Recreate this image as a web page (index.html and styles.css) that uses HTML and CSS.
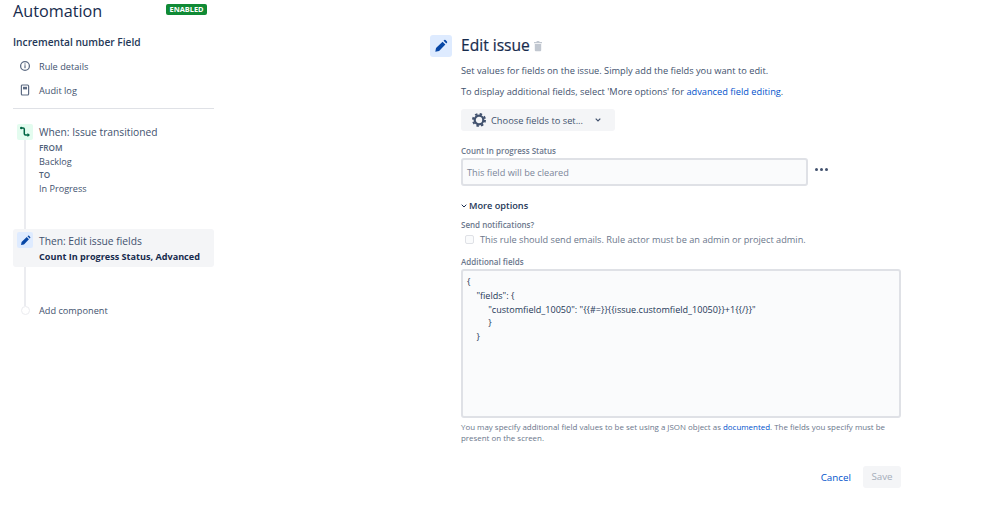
FILE: index.html
```html
<!DOCTYPE html>
<html lang="en">
<head>
<meta charset="utf-8">
<title>Automation</title>
<link rel="stylesheet" href="styles.css">
</head>
<body>
<div class="page">
  <aside class="side">
    <header class="side-head">
      <h1 class="title">Automation</h1>
      <span class="lozenge">ENABLED</span>
    </header>
    <h2 class="rule-name">Incremental number Field</h2>
    <nav class="side-nav">
      <a class="nav-item">
        <svg class="nav-icon" viewBox="0 0 12 12" width="12" height="12"><circle cx="6" cy="6" r="4.4" fill="none" stroke="#5e6c84" stroke-width="1.3"/><rect x="5.4" y="5.2" width="1.2" height="3" fill="#5e6c84"/><rect x="5.4" y="3.4" width="1.2" height="1.2" fill="#5e6c84"/></svg>
        <span>Rule details</span>
      </a>
      <a class="nav-item">
        <svg class="nav-icon" viewBox="0 0 12 12" width="12" height="12"><rect x="2.4" y="1" width="7.2" height="10" rx="1" fill="none" stroke="#5e6c84" stroke-width="1.2"/><rect x="4" y="2.8" width="4" height="2.6" fill="#5e6c84"/></svg>
        <span>Audit log</span>
      </a>
    </nav>
    <div class="flow">
      <div class="flow-line"></div>
      <div class="step step-when">
        <span class="step-icon green">
          <svg viewBox="0 0 12 12" width="12" height="12"><path d="M2.2 2H4.2Q5.3 2 5.3 3.1V7.8Q5.3 9 6.5 9H9" fill="none" stroke="#006644" stroke-width="1.5"/><circle cx="2.2" cy="2" r="1.2" fill="#006644"/><path d="M8.5 6.9 11 9 8.500 11.1Z" fill="#006644"/></svg>
        </span>
        <div class="step-body">
          <div class="step-title">When: Issue transitioned</div>
          <div class="step-key">FROM</div>
          <div class="step-val">Backlog</div>
          <div class="step-key">TO</div>
          <div class="step-val">In Progress</div>
        </div>
      </div>
      <div class="step step-then">
        <span class="step-icon blue">
          <svg viewBox="0 0 16 16" width="11" height="11"><path d="M1.5 14.5 2.3 10.2 9.8 3 13 6.2 5.8 13.7Z M10.9 1.9 11.7 1.2a1.1 1.1 0 0 1 1.5 0l1.6 1.6a1.1 1.1 0 0 1 0 1.5L14.1 5.1Z" fill="#0747a6"/></svg>
        </span>
        <div class="step-body">
          <div class="step-title">Then: Edit issue fields</div>
          <div class="step-strong">Count In progress Status, Advanced</div>
        </div>
      </div>
      <div class="step step-add">
        <span class="add-dot"></span>
        <span class="add-label">Add component</span>
      </div>
    </div>
  </aside>

  <main class="panel">
    <header class="panel-head">
      <span class="panel-icon">
        <svg viewBox="0 0 16 16" width="14" height="14"><path d="M1.5 14.5 2.3 10.2 9.8 3 13 6.2 5.8 13.7Z M10.9 1.9 11.7 1.2a1.1 1.1 0 0 1 1.5 0l1.6 1.6a1.1 1.1 0 0 1 0 1.5L14.1 5.1Z" fill="#0747a6"/></svg>
      </span>
      <h2 class="panel-title">Edit issue</h2>
      <svg class="trash" viewBox="0 0 10 12" width="10" height="12"><path d="M3.6 1h2.8v1H9v1.2H1V2h2.6Z M1.8 4h6.4v6.2a1 1 0 0 1-1 1H2.8a1 1 0 0 1-1-1Z" fill="#c1c7d0"/></svg>
    </header>
    <div class="panel-body">
      <p class="text">Set values for fields on the issue. Simply add the fields you want to edit.</p>
      <p class="text">To display additional fields, select 'More options' for <a class="link">advanced field editing</a>.</p>
      <button class="choose" type="button">
        <svg viewBox="0 0 16 16" width="16" height="16"><circle cx="8" cy="8" r="4.3" fill="none" stroke="#42526e" stroke-width="2.2"/><circle cx="8" cy="8" r="6" fill="none" stroke="#42526e" stroke-width="2" stroke-dasharray="2.4 2.312"/></svg>
        <span>Choose fields to set...</span>
        <svg class="chev" viewBox="0 0 6 4" width="6" height="4"><path d="M.7.6 3 2.9 5.3.6" fill="none" stroke="#42526e" stroke-width="1.2"/></svg>
      </button>
      <label class="label label-count">Count In progress Status</label>
      <div class="field-row">
        <div class="input">This field will be cleared</div>
        <span class="dots"><i></i><i></i><i></i></span>
      </div>
      <div class="more">
        <svg viewBox="0 0 6 4" width="6" height="4"><path d="M.7.7 3 3 5.3.7" fill="none" stroke="#172b4d" stroke-width="1"/></svg>
        <span>More options</span>
      </div>
      <label class="label label-send">Send notifications?</label>
      <div class="check-row">
        <span class="check"></span>
        <span>This rule should send emails. Rule actor must be an admin or project admin.</span>
      </div>
      <label class="label label-add">Additional fields</label>
      <pre class="json">{
    "fields": {
         "customfield_10050": "{{#=}}{{issue.customfield_10050}}+1{{/}}"
         }
    }</pre>
      <p class="help">You may specify additional field values to be set using a JSON object as <a class="link">documented</a>. The fields you specify must be present on the screen.</p>
      <div class="actions">
        <a class="cancel">Cancel</a>
        <span class="save">Save</span>
      </div>
    </div>
  </main>
</div>
</body>
</html>
```
FILE: styles.css
```css
* { box-sizing: border-box; }
html, body { margin: 0; padding: 0; background: #fff; }
body {
  width: 999px;
  height: 505px;
  overflow: hidden;
  font-family: "Open Sans", "Noto Sans", sans-serif;
  font-size: 10px;
  color: #172b4d;
}
.page { display: flex; align-items: flex-start; }
.side { width: 201px; margin-left: 13px; flex: none; }
.side-head { display: flex; align-items: flex-start; justify-content: space-between; height: 33px; padding-right: 7px; }
.title { margin: 0; font-size: 16.2px; font-weight: 400; line-height: 22px; color: #172b4d; }
.lozenge {
  margin-top: 4px;
  background: #108a35;
  color: #fff;
  font-size: 7.4px;
  font-weight: 700;
  line-height: 11px;
  padding: 0 3.5px;
  border-radius: 2px;
}
.rule-name { margin: 0; font-size: 10.2px; font-weight: 600; line-height: 18px; color: #253858; }
.side-nav { margin-top: 3px; border-bottom: 1px solid #dfe1e6; padding-bottom: 6px; }
.nav-item { display: flex; align-items: center; height: 24px; padding-left: 6px; color: #42526e; font-size: 9.2px; }
.nav-icon { margin-right: 8px; flex: none; }
.flow { position: relative; padding-top: 15px; }
.flow-line { position: absolute; left: 11px; top: 25px; width: 2px; height: 172px; background: #ebecf0; }
.step { position: relative; display: flex; }
.step-when { padding-left: 4px; height: 105px; }
.step-icon { width: 16px; height: 16px; border-radius: 2px; flex: none; display: flex; align-items: center; justify-content: center; }
.step-icon.green { background: #e3fcef; }
.step-icon.blue { background: #deebff; }
.step-body { margin-left: 6px; }
.step-title { font-size: 10.25px; line-height: 16px; margin-bottom: 1px; color: #42526e; }
.step-key { font-size: 8.2px; font-weight: 600; line-height: 13.5px; color: #505f79; }
.step-val { font-size: 9.1px; line-height: 13.5px; color: #42526e; }
.step-then { background: #f4f5f7; border-radius: 3px; padding: 3px 4px; height: 38px; }
.step-then .step-body { padding-top: 1px; }
.step-then .step-title { margin-bottom: 0; }
.step-strong { font-size: 9.1px; font-weight: 700; line-height: 16px; color: #172b4d; white-space: nowrap; }
.step-add { margin-top: 35px; padding-left: 8px; align-items: center; height: 16px; }
.add-dot { width: 9px; height: 9px; border-radius: 50%; background: #fff; border: 1px solid #ebecf0; flex: none; margin-right: 9px; }
.add-label { font-size: 9.2px; color: #42526e; }
.panel { margin-left: 216px; width: 472px; padding-top: 35px; flex: none; }
.panel-head { display: flex; align-items: center; height: 22px; }
.panel-icon { width: 22px; height: 22px; background: #deebff; border-radius: 3px; display: flex; align-items: center; justify-content: center; flex: none; }
.panel-title { margin: 0 0 2px 9px; font-size: 15.6px; font-weight: 400; color: #172b4d; -webkit-text-stroke: 0.2px #172b4d; }
.trash { margin-left: 3px; }
.panel-body { padding-left: 31px; width: 471px; }
.text { margin: 0; font-size: 9.25px; line-height: 21px; color: #42526e; }
.panel-body > .text:first-child { margin-top: 3px; }
.link { color: #0052cc; }
.choose {
  display: flex;
  align-items: center;
  width: 154px;
  height: 22px;
  margin-top: 7px;
  padding: 0 10px;
  background: #f4f5f7;
  border: 0;
  border-radius: 3px;
  font: inherit;
  font-size: 9.3px;
  color: #42526e;
}
.choose span { margin-left: 4px; }
.chev { margin-left: 12px; }
.label { display: block; font-size: 8px; font-weight: 600; line-height: 12px; color: #6b778c; }
.label-count { margin-top: 14px; }
.field-row { display: flex; align-items: center; margin-top: 1px; }
.input {
  width: 347px;
  height: 28px;
  padding-left: 4px;
  border: 2px solid #dfe1e6;
  border-radius: 3px;
  background: #fafbfc;
  font-size: 9.2px;
  line-height: 26px;
  color: #7a869a;
}
.dots { display: flex; gap: 2px; margin-left: 7px; margin-top: -5px; }
.dots i { width: 3px; height: 3px; border-radius: 50%; background: #42526e; }
.more { display: flex; align-items: center; margin-top: 13px; font-size: 9.2px; font-weight: 600; line-height: 14px; color: #253858; }
.more svg { margin-right: 2px; }
.label-send { margin-top: 6px; }
.check-row { display: flex; align-items: center; margin-top: 0; padding-left: 4px; height: 16px; font-size: 9.2px; color: #6b778c; white-space: nowrap; }
.check { width: 9px; height: 9px; border: 1.5px solid #dfe1e6; border-radius: 2px; background: #fafbfc; margin-right: 6px; flex: none; }
.label-add { margin-top: 9px; }
.json {
  width: 440px;
  height: 149px;
  margin: 1px 0 0;
  padding: 4px 4px;
  border: 2px solid #dfe1e6;
  border-radius: 3px;
  background: #fafbfc;
  font-family: inherit;
  font-size: 9.07px;
  line-height: 13.8px;
  color: #253858;
}
.help { margin: 4px 0 0; width: 440px; font-size: 7.93px; line-height: 11px; color: #6b778c; }
.actions { display: flex; align-items: center; justify-content: flex-end; width: 440px; margin-top: 22px; }
.cancel { font-size: 9.8px; color: #0052cc; margin-right: 12px; }
.save { width: 38px; height: 22px; background: #f4f5f7; border-radius: 3px; font-size: 9.8px; line-height: 22px; text-align: center; color: #a5adba; }
```
